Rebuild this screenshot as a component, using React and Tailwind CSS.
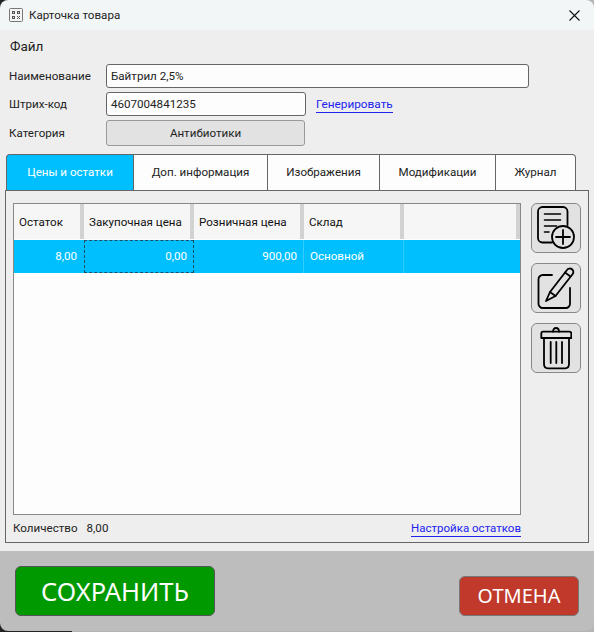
import React from 'react';

function QrIcon() {
  return (
    <svg width="14" height="14" viewBox="0 0 14 14" className="block">
      <rect x="0.5" y="0.5" width="13" height="13" rx="1" fill="#f4f4f4" stroke="#777" />
      <path d="M3 3h3v3H3zM8 3h3v3H8zM3 8h3v3H3z" fill="#555" />
      <path d="M8 8h1v1H8zM10 8h1v1h-1zM9 9h1v1H9zM8 10h1v1H8zM10 10h1v1h-1z" fill="#555" />
      <path d="M4 4h1v1H4zM9 4h1v1H9zM4 9h1v1H4z" fill="#ddd" />
    </svg>
  );
}

function AddIcon() {
  return (
    <svg width="40" height="44" viewBox="0 0 40 44" fill="none" stroke="#000" strokeWidth="1.8" strokeLinecap="round">
      <path d="M16 36.5H6.5C4 36.5 2 34.5 2 32V5.5C2 3 4 1 6.5 1H27C29.5 1 31.5 3 31.5 5.5V19" />
      <path d="M8.5 8H24.5M8.5 14H24.5M8.5 20H20.5M8.5 26H13" strokeWidth="1.6" />
      <circle cx="27" cy="31" r="11" />
      <path d="M27 24V38M20 31H34" strokeWidth="1.8" />
    </svg>
  );
}

function EditIcon() {
  return (
    <svg width="38" height="44" viewBox="0 0 38 44" fill="none" stroke="#000" strokeWidth="1.8" strokeLinecap="round" strokeLinejoin="round">
      <path d="M15 9H5.5C3.5 9 1.5 11 1.5 13V38C1.5 40 3.5 42 5.5 42H29C31 42 33 40 33 38V22" />
      <path d="M9 35L13 26L30 4C31 2.5 33.5 2 35 3.2C36.5 4.4 36.8 6.6 35.7 8L18.5 30L9 35Z" />
      <path d="M13 26L18.5 30M28 6.5L33.5 10.5" />
    </svg>
  );
}

function TrashIcon() {
  return (
    <svg width="32" height="44" viewBox="0 0 32 44" fill="none" stroke="#000" strokeWidth="1.8" strokeLinecap="round" strokeLinejoin="round">
      <path d="M13 5.7C13 3.5 14.2 2 16 2C17.8 2 19 3.5 19 5.7" />
      <path d="M3 5.7H29.5C30.6 5.7 31.3 6.6 31.3 7.7V12H1.3V7.7C1.3 6.6 1.9 5.7 3 5.7Z" />
      <path d="M4 12V38C4 40.5 5.5 42.3 8 42.3H25C27.5 42.3 29 40.5 29 38V12" />
      <path d="M10.7 16V37M16.3 16V37M22 16V37" />
    </svg>
  );
}

function Tab({ label, active, width }) {
  return (
    <div
      className={
        'flex h-9 items-center justify-center border-r border-t border-[#666] pt-px text-[11.6px] ' +
        width +
        (active ? ' border-l bg-[#00bfff] text-white rounded-tl' : ' bg-[#fdfdfd] text-[#222]')
      }
    >
      {label}
    </div>
  );
}

function HeaderCell({ label, width }) {
  return (
    <div className={'flex items-center border-r-4 border-[#d2d2d2] pl-[5px] pt-[2px] text-[11.6px] text-[#111] ' + width}>
      {label}
    </div>
  );
}

function SideButton({ children }) {
  return (
    <div className="flex h-[50px] w-[50px] items-center justify-center rounded-md border border-[#888] bg-[#e2e2e2]">
      {children}
    </div>
  );
}

export default function App() {
  return (
    <div className="h-[632px] w-[594px] overflow-hidden bg-[linear-gradient(90deg,#222_0,#222_72px,#b5b5b5_72px)]">
      <div
        className="flex h-[631px] flex-col overflow-hidden rounded-lg text-[#222]"
        style={{ fontFamily: 'Roboto, sans-serif' }}
      >
        {/* Заголовок окна */}
        <div className="flex h-[30px] items-center bg-[#f3f6f7] pl-[9px] pr-[14px]">
          <QrIcon />
          <span className="ml-[6px] pt-px text-[11.6px]">Карточка товара</span>
          <svg className="ml-auto" width="11" height="11" viewBox="0 0 11 11" stroke="#111" strokeWidth="1.1">
            <path d="M0.5 0.5L10.5 10.5M10.5 0.5L0.5 10.5" />
          </svg>
        </div>

        {/* Форма */}
        <div className="flex h-[521px] flex-col bg-[#eeeeee] pl-[5px] pr-[5px]">
          <div className="mt-[8px] pl-[5px] text-[13.5px] leading-4">Файл</div>

          <div className="mt-[10px] grid grid-cols-[101px_auto_1fr] grid-rows-[24px_24px_26px] gap-y-1 pr-[60px]">
            <span className="self-center pl-[4px] pt-[2px] text-[11.6px]">Наименование</span>
            <div className="col-span-2 flex items-center rounded-[3px] border border-[#666] bg-[#fdfdfd] pl-[4px] pt-px text-[11.6px]">
              Байтрил 2,5%
            </div>

            <span className="self-center pl-[4px] pt-[2px] text-[11.6px]">Штрих-код</span>
            <div className="flex w-[200px] items-center rounded-[3px] border border-[#666] bg-[#fdfdfd] pl-[4px] pt-px text-[11.6px]">
              4607004841235
            </div>
            <span className="ml-[10px] self-center justify-self-start border-b border-[#2222ee] text-[11.8px] leading-[16px] text-[#2222ee]">
              Генерировать
            </span>

            <span className="self-center pl-[4px] pt-[2px] text-[11.6px]">Категория</span>
            <div className="flex w-[199px] items-center justify-center rounded-[3px] border border-[#999] bg-[#e2e2e2] pt-px text-[11.6px]">
              Антибиотики
            </div>
          </div>

          <div className="mt-2 flex pl-px">
            <Tab label="Цены и остатки" active width="w-[128px]" />
            <Tab label="Доп. информация" width="w-[134px]" />
            <Tab label="Изображения" width="w-[112px]" />
            <Tab label="Модификации" width="w-[116px]" />
            <Tab label="Журнал" width="w-[80px] rounded-tr" />
          </div>

          <div className="flex h-[353px] flex-col border border-[#666] pl-[7px] pr-[7px]">
            <div className="mt-3 flex gap-[10px]">
              <div className="h-[312px] w-[508px] border border-[#888] bg-[#fdfdfd]">
                <div className="flex h-[35px] bg-[#f6f6f6]">
                  <HeaderCell label="Остаток" width="w-[70px]" />
                  <HeaderCell label="Закупочная цена" width="w-[110px]" />
                  <HeaderCell label="Розничная цена" width="w-[110px]" />
                  <HeaderCell label="Склад" width="w-[100px]" />
                  <HeaderCell label="" width="w-[116px]" />
                </div>
                <div className="mt-px flex h-[33px] bg-[#00bfff] text-[11.6px] text-white">
                  <div className="flex w-[70px] items-center justify-end pr-[7px] pt-px">8,00</div>
                  <div className="flex w-[110px] items-center justify-end border border-dashed border-[#1c4f66] pr-[6px] pt-px">0,00</div>
                  <div className="flex w-[109px] items-center justify-end pr-[6px] pt-px">900,00</div>
                  <div className="flex w-[100px] items-center border-l border-[#33ccff] pl-[6px] pt-px">Основной</div>
                  <div className="flex-1 border-l border-[#33ccff]" />
                </div>
              </div>
              <div className="flex flex-col gap-[10px]">
                <SideButton><AddIcon /></SideButton>
                <SideButton><EditIcon /></SideButton>
                <SideButton><TrashIcon /></SideButton>
              </div>
            </div>

            <div className="mt-[5px] flex w-[508px] items-center text-[11.6px]">
              <span>Количество</span>
              <span className="ml-[9px]">8,00</span>
              <span className="ml-auto border-b border-[#2222ee] text-[11.5px] leading-[16px] text-[#2222ee]">Настройка остатков</span>
            </div>
          </div>
        </div>

        {/* Нижняя панель */}
        <div className="flex flex-1 items-end justify-between bg-[#bdbdbd] pb-[15px] pl-[15px] pr-[15px]">
          <div
            className="flex h-[50px] w-[200px] items-center justify-center rounded-md border border-[#555] bg-[#009900] text-[25.5px] text-white"
            style={{ fontFamily: '"Noto Sans", sans-serif' }}
          >
            СОХРАНИТЬ
          </div>
          <div
            className="flex h-10 w-[120px] items-center justify-center rounded-md border border-[#777] bg-[#c0392b] text-xl text-white"
            style={{ fontFamily: '"Noto Sans", sans-serif' }}
          >
            ОТМЕНА
          </div>
        </div>
      </div>
    </div>
  );
}
